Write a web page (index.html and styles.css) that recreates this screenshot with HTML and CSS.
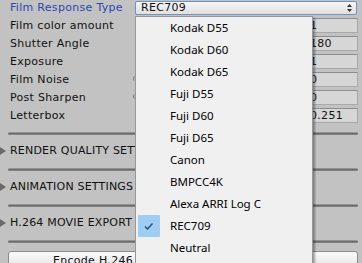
FILE: index.html
```html
<!DOCTYPE html>
<html>
<head>
<meta charset="utf-8">
<link rel="stylesheet" href="styles.css">
</head>
<body>
<div class="inspector">
  <div class="row">
    <div class="label focus">Film Response Type</div>
    <div class="ctrl">
      <div class="dropdown"><span>REC709</span>
        <svg class="arrows" width="5" height="8" viewBox="0 0 5 8"><path d="M2.5 0 L5 3 L0 3 Z M0 5 L5 5 L2.5 8 Z" fill="#333"/></svg>
      </div>
    </div>
  </div>
  <div class="row"><div class="label">Film color amount</div><div class="ctrl"><div class="value">1</div></div></div>
  <div class="row"><div class="label">Shutter Angle</div><div class="ctrl"><div class="value">180</div></div></div>
  <div class="row"><div class="label">Exposure</div><div class="ctrl"><div class="value">1</div></div></div>
  <div class="row"><div class="label">Film Noise</div><div class="ctrl"><span class="cap"></span><div class="value">0</div></div></div>
  <div class="row"><div class="label">Post Sharpen</div><div class="ctrl"><span class="cap"></span><div class="value">0</div></div></div>
  <div class="row"><div class="label">Letterbox</div><div class="ctrl"><div class="value">0.251</div></div></div>

  <div class="sep first"></div>
  <div class="foldout"><span class="tri"></span>RENDER QUALITY SETTINGS</div>
  <div class="sep"></div>
  <div class="foldout"><span class="tri"></span>ANIMATION SETTINGS</div>
  <div class="sep"></div>
  <div class="foldout"><span class="tri"></span>H.264 MOVIE EXPORT</div>
  <div class="sep"></div>
  <div class="buttons">
    <div class="btn">Encode H.246</div>
    <div class="btn"></div>
  </div>
</div>

<div class="menu">
  <div class="item">Kodak D55</div>
  <div class="item">Kodak D60</div>
  <div class="item">Kodak D65</div>
  <div class="item">Fuji D55</div>
  <div class="item">Fuji D60</div>
  <div class="item">Fuji D65</div>
  <div class="item">Canon</div>
  <div class="item">BMPCC4K</div>
  <div class="item">Alexa ARRI Log C</div>
  <div class="item checked"><span class="check"><svg width="22" height="22" viewBox="0 0 22 22"><path d="M7 11.5 L9.5 14 L14.5 8.5" fill="none" stroke="#2b4a73" stroke-width="1.4"/></svg></span>REC709</div>
  <div class="item">Neutral</div>
</div>
</body>
</html>
```

FILE: styles.css
```css
html, body {
  margin: 0;
  padding: 0;
}
body {
  background: #c2c2c2;
  width: 362px;
  height: 263px;
  overflow: hidden;
  position: relative;
  font-family: "DejaVu Sans", Verdana, sans-serif;
  font-size: 11px;
  color: #111;
}
.inspector {
  display: flex;
  flex-direction: column;
}
.row {
  display: flex;
  height: 18px;
  padding-left: 10px;
}
.label {
  width: 123px;
  line-height: 16px;
  white-space: nowrap;
  letter-spacing: 0.3px;
}
.label.focus {
  color: #2a46b5;
}
.ctrl {
  flex: 1;
  display: flex;
  justify-content: flex-end;
  align-items: flex-start;
  margin-right: 4px;
  position: relative;
}
.dropdown {
  margin-top: 1px;
  margin-left: 2px;
  margin-right: 1px;
  flex: 1;
  height: 12px;
  border: 1px solid #6f92c4;
  border-radius: 2px;
  background: linear-gradient(#f6f6f6, #e0e0e0);
  display: flex;
  align-items: center;
  justify-content: space-between;
  padding: 0 4px 0 5px;
  line-height: 12px;
  color: #111;
  letter-spacing: 0.3px;
}
.arrows {
  display: block;
}
.value {
  width: 47px;
  height: 13px;
  border: 1px solid #a9a9a9;
  border-top-color: #8e8e8e;
  background: #d6d6d6;
  line-height: 13px;
  padding-left: 3px;
  color: #111;
  letter-spacing: 0.3px;
}
.cap {
  position: absolute;
  left: 0;
  top: 4px;
  width: 3px;
  height: 5px;
  border-left: 1px solid #777;
  border-radius: 3px 0 0 3px;
}
.sep {
  height: 3px;
  margin: 8px 4px 7px 8px;
  border-radius: 2px;
  background: linear-gradient(#a8a8a8, #6c6c6c 50%, #8c8c8c);
}
.sep.first {
  margin-top: 6px;
}
.foldout {
  height: 18px;
  line-height: 18px;
  display: flex;
  align-items: center;
  white-space: nowrap;
  letter-spacing: 0.2px;
}
.tri {
  width: 0;
  height: 0;
  border-top: 4px solid transparent;
  border-bottom: 4px solid transparent;
  border-left: 6px solid #6a6a6a;
  margin-right: 4px;
}
.buttons {
  display: flex;
  gap: 10px;
  margin: 1px 4px 0 8px;
}
.btn {
  flex: 1;
  height: 16px;
  border: 1px solid #8c8c8c;
  border-radius: 3px;
  background: linear-gradient(#fbfbfb, #e4e4e4);
  text-align: center;
  line-height: 18px;
  color: #111;
  letter-spacing: 0.3px;
}
.menu {
  position: absolute;
  left: 135px;
  top: 16px;
  width: 176px;
  height: 260px;
  background: #f0f0f0;
  border: 1px solid #979797;
  box-shadow: 2px 2px 2px rgba(0, 0, 0, 0.35);
  font-family: "Noto Sans", "Segoe UI", sans-serif;
  font-size: 11.5px;
  color: #000;
}
.item {
  height: 22px;
  line-height: 22px;
  padding-left: 34px;
  position: relative;
  white-space: nowrap;
}
.check {
  position: absolute;
  left: 2px;
  top: 0;
  width: 22px;
  height: 22px;
  background: #9fcdf4;
  border-radius: 1px;
}
.check svg {
  display: block;
}
```
